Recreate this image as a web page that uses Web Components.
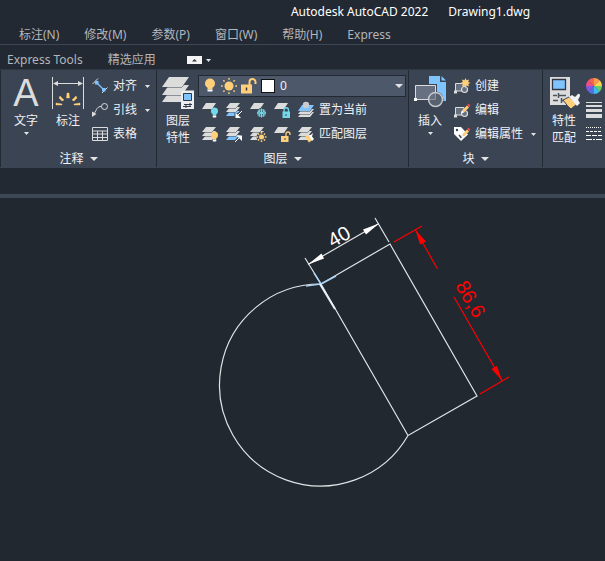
<!DOCTYPE html>
<html lang="zh-CN">
<head>
<meta charset="utf-8">
<title>Autodesk AutoCAD 2022 Drawing1.dwg</title>
<style>
html, body { height: 100%; margin: 0; }
body {
  --bg: #222933; --panel: #3b4453; --line: #3d4654; --field: #4d586a; --canvas: #212830;
  background: var(--canvas); color: #f0f1f3;
  font: 12px/16px "Noto Sans", "Noto Sans CJK SC", sans-serif;
}
</style>
</head>
<body>
<cad-window></cad-window>
<script>
const C = { w: '#dcdcdc', b: '#80c4ff', y: '#ffcf7a', c: '#72d8e8', d: '#3b4453' };

const sheet = (x, y, w, h, s, fill) =>
  `<path d="M${x + s} ${y}H${x + w}L${x + w - s} ${y + h}H${x}Z" fill="${fill}" stroke="${C.d}" stroke-width="1" paint-order="stroke"/>`;
const oneSheet = sheet(0, 1, 14, 6, 4, C.w);
const sheets = last => sheet(0, 9, 14, 5, 4, last) + sheet(0, 5, 14, 5, 4, C.w) + sheet(0, 1, 14, 5, 4, C.w);
const bulb = (x, y, r, fill) =>
  `<circle cx="${x}" cy="${y}" r="${r}" fill="${fill}"/><path d="M${x - r / 2} ${y + r - 1}h${r}v2h${-r}z" fill="${fill}"/><path d="M${x - r / 2} ${y + r + 1}h${r}v2h${-r}z" fill="#fff"/>`;
const sun = (x, y, r, ring) => {
  let s = `<circle cx="${x}" cy="${y}" r="${r}" fill="${C.y}"/>`;
  for (let a = 0; a < 360; a += 45)
    s += `<path d="M${x} ${y - ring}v1.700" stroke="${C.y}" stroke-width="1.500" transform="rotate(${a} ${x} ${y})"/>`;
  return s;
};
const pencil = `<path d="M8 8.500L13 3.500L15 5.500L10 10.500Z" fill="${C.y}"/><path d="M13 3L14.500 1.500L16.500 3.500L15.200 5.200Z" fill="#f0444d"/><path d="M8 8.500L7 11.500L10 10.500Z" fill="#fff"/>`;
const block = `<path d="M1.500 14V5.500H10V13H1.500" fill="#667080" stroke="${C.w}"/><circle cx="10.500" cy="11.500" r="3" fill="#667080" stroke="${C.w}" stroke-width="1.200"/><path d="M0 12.500h3v3H0z" fill="${C.w}"/>`;
const wheel = ['#ff9b48', '#ffd34e', '#62cf68', '#45b9e8', '#4c76e8', '#8c55e9', '#ed4e83', '#f96350'].map((c, i) =>
  `<path d="M8 8V0A8 8 0 0 1 13.660 2.340Z" fill="${c}" transform="rotate(${i * 45} 8 8)"/>`).join('');

const ICONS = {
  text: [32, `<text x="16" y="30" text-anchor="middle" font-family="Liberation Sans, sans-serif" font-size="38" fill="${C.w}">A</text>`],
  dimension: [32, `<path d="M.5 1V33M31.500 1V33" stroke="${C.w}"/><path d="M3 7.500H29" stroke="${C.w}"/><path d="M1 7.500l5-2.500v5zM31 7.500l-5-2.500v5z" fill="${C.w}"/>
    <path d="M4 29v-2l6 1v1zM28 29v-2l-6 1v1zM8 20l4 4-2 1-3-3zM24 20l-4 4 2 1 3-3zM15 17h2l.5 5h-3z" fill="${C.y}" stroke="${C.y}" stroke-width=".4"/>`],
  layers: [32, sheet(0, 16, 27, 10, 7, C.w) + sheet(0, 9, 27, 10, 7, C.w) + sheet(0, 1, 27, 10, 7, C.w) +
    `<path d="M19 14.500H32V33H19z" fill="#eee"/><path d="M21.500 17.500h8v7h-8z" fill="${C.b}" stroke="#303845"/><path d="M22 28.500h8m-2-1.500v3M21 30.500h8m-5-1.500v3" stroke="#303845" fill="none"/>`],
  insert: [32, `<path d="M15 0H26V6H32V25H15Z" fill="${C.b}"/><path d="M27.500 0L32 4.500H27.500Z" fill="${C.b}"/>
    <path d="M1.500 9.500h20v14h-20z" fill="#667080" stroke="${C.d}" stroke-width="3"/><circle cx="21.500" cy="23.500" r="8" fill="${C.d}"/>
    <path d="M1.500 9.500h20v14h-20z" fill="#667080" stroke="${C.w}"/><circle cx="21.500" cy="23.500" r="7" fill="#667080aa" stroke="#c6c9ce" stroke-width="1.500"/><path d="M0 22h3v3H0z" fill="#fff"/>`],
  match: [32, `<path d="M2 1H22V29H2z" fill="${C.w}"/><path d="M4.500 3.500h13v10h-13z" fill="${C.b}" stroke="#303845" stroke-width="1.300"/>
    <path d="M5 19.500h4m2 0h7M5 24.500h5m4 0h5M10.500 17v5M13.500 22v5" stroke="#4b525c" stroke-width="1.500"/>
    <path d="M15 24L21 21L29 28L23 33Q20 31 15 24Z" fill="${C.y}" stroke="${C.d}"/><path d="M21 21L24 19L27 21L30 18Q32 17 32 20L30 24L32 27L29 30Z" fill="#f2f2f2"/>`],
  align: [16, `<path d="M.5 6L6 .5M10 15L15.500 9.500" stroke="${C.w}"/><path d="M4 4L12 12" stroke="${C.b}" stroke-width="1.200"/><path d="M3 3h3.500v3.500H3zM10 10h3.500v3.500H10z" fill="${C.b}"/>`],
  leader: [16, `<circle cx="12.500" cy="4.500" r="3" fill="none" stroke="${C.w}"/><path d="M9.500 4.500C5 4.500 5 7 2 12" fill="none" stroke="${C.w}"/><path d="M0 15V9.500L4.500 12Z" fill="${C.w}"/>`],
  table: [16, `<path d="M.5 1.500h15v13H.5zM.5 5h15M.5 8h15M.5 11.500h15M5.500 5v9M10.500 5v9" fill="none" stroke="${C.w}"/>`],
  layerOff: [16, oneSheet + bulb(12.500, 9, 3.500, C.c)],
  layerIsolate: [16, sheets(C.b) + `<path d="M16 9L11 14M10 11v4.500h4.500" fill="none" stroke="${C.d}" stroke-width="3"/><path d="M16 9L11 14" stroke="#fff"/><path d="M9.500 10.500V16H15z" fill="#fff"/>`],
  layerFreeze: [16, oneSheet + `<circle cx="11.500" cy="11" r="5" fill="${C.d}"/><g stroke="${C.c}" stroke-width="1" fill="none">${[0, 60, 120].map(a => `<path d="M11.500 6.500V15.500M9.500 7l2 2 2-2M9.500 15l2-2 2 2" transform="rotate(${a} 11.500 11)"/>`).join('')}</g>`],
  layerLock: [16, oneSheet + `<path d="M10 10V8a2.200 2.200 0 0 1 4.500 0v2" fill="none" stroke="${C.c}" stroke-width="1.300"/><path d="M8.500 9.500h7.500V16H8.500z" fill="${C.c}"/><path d="M12 12v2" stroke="${C.d}"/>`],
  layerCurrent: [16, sheet(0, 10, 16, 5, 4, C.w) + sheet(0, 7, 16, 5, 4, C.w) + sheet(0, 3, 16, 6, 4, C.b) + `<circle cx="8" cy="3" r="3.200" fill="#c9cbce"/>`],
  layerOn: [16, sheets(C.w) + bulb(12.500, 9, 3.500, C.y)],
  layerUnisolate: [16, sheets(C.b) + `<path d="M9 16L14 11" stroke="${C.d}" stroke-width="3"/><path d="M9 16L14 11" stroke="#fff"/><path d="M10.500 9.500H16V15z" fill="#fff"/>`],
  layerThaw: [16, sheets(C.w) + `<circle cx="11.500" cy="11" r="5" fill="${C.d}"/>` + sun(11.500, 11, 2.500, 5)],
  layerUnlock: [16, oneSheet + `<path d="M12 10V8a2 2 0 0 1 4 0v1" fill="none" stroke="${C.y}" stroke-width="1.300"/><path d="M7 10h7.500v6H7z" fill="${C.y}"/><path d="M11 12v2" stroke="${C.d}"/>`],
  layerMatch: [16, sheets(C.w) + `<path d="M7 11L10 8.500L15 13.500L11 16.500Z" fill="${C.y}"/><path d="M10 8.500L12 9.500L15 7L14 10.500L16 13L14 15Z" fill="#fff"/>`],
  create: [16, block + `<path d="M11.500 0l1 2.300 2.600-.8-.9 2.400 2.300 1-2.300 1 .9 2.500-2.600-.9-1 2.500-1-2.500-2.600.9.9-2.500-2.300-1 2.300-1-.9-2.400 2.600.8z" fill="${C.y}"/>`],
  edit: [16, block + pencil],
  editAttr: [16, `<path d="M0 1H7L14 8.500L7 15L0 8Z" fill="#fff"/><circle cx="3" cy="4" r="1.200" fill="${C.d}"/><path d="M5 9l2 2.500 4-4" fill="none" stroke="${C.d}" stroke-width="1.500"/>` + pencil],
  color: [16, wheel],
  weight: [16, `<path d="M0 .5h16" stroke="${C.w}"/><path d="M0 4h16" stroke="${C.w}" stroke-width="2"/><path d="M0 8.500h16" stroke="${C.w}" stroke-width="3"/><path d="M0 14h16" stroke="${C.w}" stroke-width="4"/>`],
  linetype: [16, `<g stroke="#fff" fill="none"><path d="M0 1.500h16" stroke-dasharray="1 1"/><path d="M0 5.500h16" stroke-dasharray="3 1"/><path d="M0 9.500h16" stroke-dasharray="5 1"/><path d="M0 13.500h16" stroke-dasharray="6 1 2 1"/></g>`],
  bulb: [16, bulb(8, 5.500, 5, C.y)],
  sun: [16, sun(8, 8, 4.500, 8)],
  unlocked: [16, `<path d="M9.500 7V4a3 3 0 0 1 6 0v2" fill="none" stroke="${C.y}" stroke-width="2"/><path d="M1 6.500h11v9H1z" fill="${C.y}"/><path d="M6.500 9.500v3" stroke="#303845" stroke-width="1.500"/>`],
  down: [8, `<path d="M2 3h5L4.500 6z" fill="#e4e4e4"/>`],
  downBig: [8, `<path d="M0 2h8L4 6z" fill="#e4e4e4"/>`]
};

/* Base class: each subclass supplies its shadow markup through render(). */
class CadElement extends HTMLElement {
  connectedCallback() {
    if (this.shadowRoot) return;
    const t = document.createElement('template');
    t.innerHTML = `<style>
      button, select { font: inherit; color: inherit; background: none; border: 0; padding: 0; margin: 0; }
      a { color: inherit; text-decoration: none; white-space: nowrap; }
    </style>` + this.render();
    this.attachShadow({ mode: 'open' }).append(t.content.cloneNode(true));
  }
}

customElements.define('cad-icon', class extends CadElement {
  render() {
    const [s, art] = ICONS[this.getAttribute('name')];
    return `<style>:host{display:inline-flex;flex:none} svg{display:block;overflow:visible}</style>
      <svg width="${s}" height="${s}" viewBox="0 0 ${s} ${s}" aria-hidden="true">${art}</svg>`;
  }
});

/* Large ribbon button: 32px icon above its label. */
customElements.define('cad-big-tool', class extends CadElement {
  render() {
    return `<style>:host{display:block;flex:none;width:40px}
      button{display:flex;flex-direction:column;align-items:center;width:100%;padding-top:2px;line-height:17px}
      span{margin-top:4px;max-width:24px}</style>
      <button type="button"><cad-icon name="${this.getAttribute('icon')}"></cad-icon><span><slot></slot></span>
      ${this.hasAttribute('menu') ? '<cad-icon name="down"></cad-icon>' : ''}</button>`;
  }
});

/* Small ribbon button: 16px icon, optional label and menu arrow. */
customElements.define('cad-tool', class extends CadElement {
  render() {
    return `<style>:host{display:block;flex:none}
      button{display:flex;align-items:center;height:24px;white-space:nowrap}
      :host([label]) button{padding:0 4px}
      span{margin-left:5px} .m{margin-left:6px}</style>
      <button type="button"${this.hasAttribute('label') ? ` aria-label="${this.getAttribute('label')}"` : ''}><cad-icon name="${this.getAttribute('icon')}"></cad-icon>
      ${this.hasAttribute('label') ? '' : '<span><slot></slot></span>'}
      ${this.hasAttribute('menu') ? '<cad-icon class="m" name="down"></cad-icon>' : ''}</button>`;
  }
});

customElements.define('cad-panel', class extends CadElement {
  render() {
    const h = this.getAttribute('heading');
    return `<style>:host{display:flex;flex-direction:column;flex:none;box-sizing:border-box;border-left:1px solid var(--bg);margin-bottom:1px;min-width:var(--w)}
      .body{display:flex;gap:2px;padding:4px 0 0 var(--start,1px);height:72px;margin-bottom:5px}
      .title{display:flex;align-items:center;justify-content:center;gap:6px;height:16px}</style>
      <div class="body"><slot></slot></div>
      ${h ? `<button type="button" class="title">${h}<cad-icon name="downBig"></cad-icon></button>` : ''}`;
  }
});

customElements.define('cad-layer-select', class extends CadElement {
  render() {
    return `<style>:host{display:flex;align-items:center;box-sizing:border-box;height:22px;margin:1px 0;padding:0 2px 0 3px;border:1px solid var(--bg);background:var(--field)}
      cad-icon{margin-right:3px} .swatch{flex:none;width:12px;height:12px;border:1px solid #111;background:#fff;margin:0 5px 0 2px}
      select{appearance:none;flex:1;min-width:0} .arrow{margin:0}</style>
      <cad-icon name="bulb"></cad-icon><cad-icon name="sun"></cad-icon><cad-icon name="unlocked"></cad-icon><i class="swatch"></i>
      <select aria-label="图层"><option>0</option></select><cad-icon class="arrow" name="downBig"></cad-icon>`;
  }
});

customElements.define('cad-title-bar', class extends CadElement {
  render() {
    return `<style>:host{display:flex;justify-content:center;gap:20px;box-sizing:border-box;height:24px;padding:4px 0 0 216px;color:#fff;white-space:nowrap}</style>
      <span>Autodesk AutoCAD 2022</span><span>Drawing1.dwg</span>`;
  }
});

customElements.define('cad-menu-bar', class extends CadElement {
  render() {
    const items = ['标注(N)', '修改(M)', '参数(P)', '窗口(W)', '帮助(H)', 'Express'];
    return `<style>:host{display:block;border-bottom:1px solid var(--line);color:#b3b6bb}
      nav{display:flex;gap:25px;padding:3px 19px 1px;height:16px}</style>
      <nav>${items.map(i => `<a href="#">${i}</a>`).join('')}</nav>`;
  }
});

customElements.define('cad-tabs', class extends CadElement {
  render() {
    return `<style>:host{display:block;border-bottom:1px solid #303845;color:#b3b6bb}
      nav{display:flex;align-items:center;gap:25px;height:24px;padding:6px 7px 0;box-sizing:border-box}
      nav a{line-height:18px}
      .fold{display:flex;align-items:center;gap:2px;margin-left:6px}
      .fold svg{display:block}</style>
      <nav><a href="#">Express Tools</a><a href="#">精选应用</a>
      <button type="button" class="fold" aria-label="最小化"><svg width="15" height="8" viewBox="0 0 15 8"><path d="M0 0h15v8H0z" fill="#f4f4f4"/><path d="M5 5.500h5L7.500 3z" fill="#303845"/></svg><cad-icon name="down"></cad-icon></button></nav>`;
  }
});

customElements.define('cad-ribbon', class extends CadElement {
  render() {
    return `<style>:host{display:flex;height:98px;background:var(--panel);overflow:hidden}
      .col{display:flex;flex-direction:column} .list{margin-left:2px}
      .row{display:flex} .grow{flex:1}</style>
      <cad-panel heading="注释" style="--w:156px;--start:5px">
        <cad-big-tool icon="text" menu>文字</cad-big-tool><cad-big-tool icon="dimension">标注</cad-big-tool>
        <div class="col list"><cad-tool icon="align" menu>对齐</cad-tool><cad-tool icon="leader" menu>引线</cad-tool><cad-tool icon="table">表格</cad-tool></div>
      </cad-panel>
      <cad-panel heading="图层" style="--w:252px">
        <cad-big-tool icon="layers">图层特性</cad-big-tool>
        <div class="col grow" style="margin:0 2px 0 -2px"><cad-layer-select></cad-layer-select>
          <div class="row"><cad-tool icon="layerOff" label="关"></cad-tool><cad-tool icon="layerIsolate" label="隔离"></cad-tool><cad-tool icon="layerFreeze" label="冻结"></cad-tool><cad-tool icon="layerLock" label="锁定"></cad-tool><cad-tool icon="layerCurrent" style="margin-left:4px">置为当前</cad-tool></div>
          <div class="row"><cad-tool icon="layerOn" label="打开"></cad-tool><cad-tool icon="layerUnisolate" label="取消隔离"></cad-tool><cad-tool icon="layerThaw" label="解冻"></cad-tool><cad-tool icon="layerUnlock" label="解锁"></cad-tool><cad-tool icon="layerMatch" style="margin-left:4px">匹配图层</cad-tool></div>
        </div>
      </cad-panel>
      <cad-panel heading="块" style="--w:134px">
        <cad-big-tool icon="insert" menu>插入</cad-big-tool>
        <div class="col list"><cad-tool icon="create">创建</cad-tool><cad-tool icon="edit">编辑</cad-tool><cad-tool icon="editAttr" menu>编辑属性</cad-tool></div>
      </cad-panel>
      <cad-panel style="--w:63px">
        <cad-big-tool icon="match">特性匹配</cad-big-tool>
        <div class="col" style="margin-left:-4px"><cad-tool icon="color" label="颜色"></cad-tool><cad-tool icon="weight" label="线宽"></cad-tool><cad-tool icon="linetype" label="线型"></cad-tool></div>
      </cad-panel>`;
  }
});

/* Model space: the part with its two aligned dimensions. */
customElements.define('cad-drawing', class extends CadElement {
  render() {
    return `<style>:host{display:flex;flex:1;min-height:0;background:var(--canvas)} svg{flex:1;width:100%;min-height:0}
      text{font-family:"Liberation Sans",sans-serif;font-size:20px;text-anchor:middle}</style>
      <svg viewBox="0 198 605 363" role="img" aria-label="Drawing1">
        <g fill="none" stroke="#e2e4e6" stroke-width="1.200">
          <path d="M321 284A101 101 0 1 0 408 435.500"/>
          <path d="M321 284L390 244L477 396L408 435.500Z"/>
          <path d="M305 258L321 284M375 218L389 242M308 264.500L379 223.500"/>
        </g>
        <path d="M308 264.500L321.500 253.500L324 258.500ZM379 223.500L363 229.500L366 234.500Z" fill="#fff"/>
        <path d="M306 286L321 284L314 273M321 284L336 276" stroke="#a9d2f5" stroke-width="1.500" fill="none"/>
        <path d="M320 284L335 309" stroke="#e3f0fb" stroke-width="2"/>
        <text transform="translate(342.500 242.500) rotate(-30)" fill="#fff">40</text>
        <g stroke="#f00" stroke-width="1.200"><path d="M394 242L422 226M415.500 230L437.500 269M454 297L502 380.500M480 394L509 377"/></g>
        <path d="M415.500 230L420 244.500L426 241.500ZM502 380.500L491.500 369L497 366Z" fill="#f00"/>
        <text transform="translate(464.500 302.500) rotate(60)" fill="#f00">86,6</text>
      </svg>`;
  }
});

customElements.define('cad-window', class extends CadElement {
  render() {
    return `<style>:host{display:flex;flex-direction:column;height:100%;background:var(--bg)}
      .strip{height:26px;border-bottom:4px solid var(--line);flex:none}</style>
      <cad-title-bar></cad-title-bar><cad-menu-bar></cad-menu-bar><cad-tabs></cad-tabs><cad-ribbon></cad-ribbon>
      <div class="strip"></div><cad-drawing></cad-drawing>`;
  }
});
</script>
</body>
</html>
